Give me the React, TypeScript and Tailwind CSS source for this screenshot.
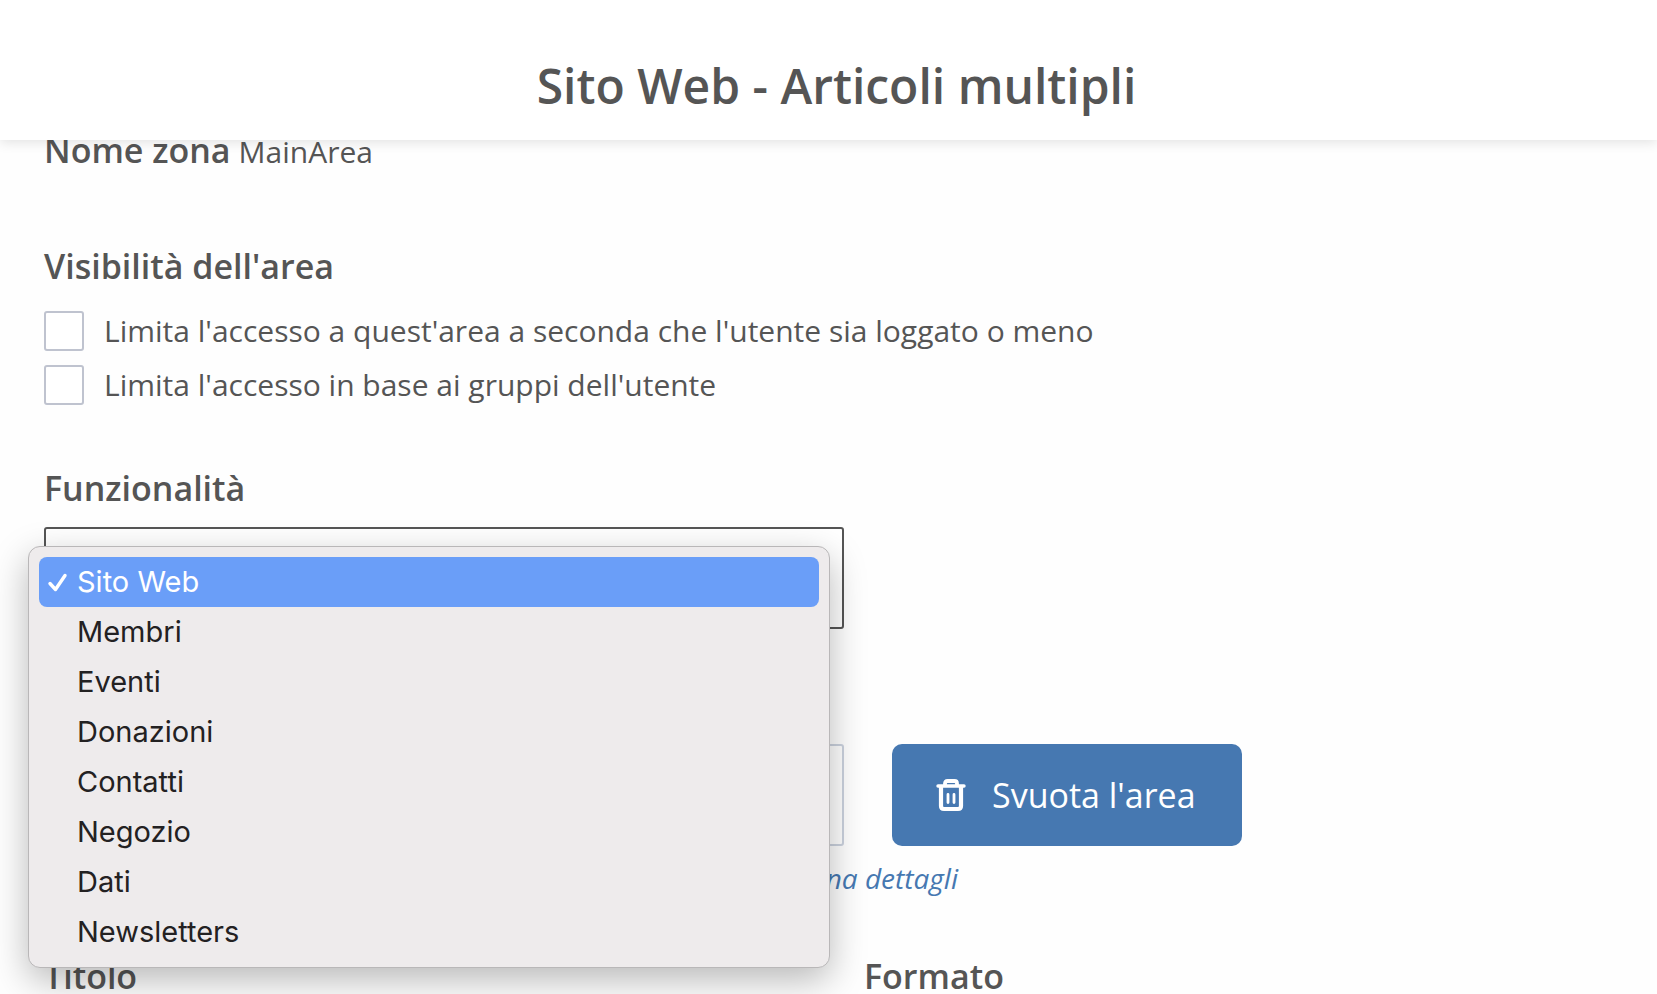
import { useState } from "react";

const features = ["Sito Web", "Membri", "Eventi", "Donazioni", "Contatti", "Negozio", "Dati", "Newsletters"];

const accessRules = [
  { id: "limit-login", label: "Limita l'accesso a quest'area a seconda che l'utente sia loggato o meno" },
  { id: "limit-groups", label: "Limita l'accesso in base ai gruppi dell'utente" },
];

function TrashIcon() {
  return (
    <svg width="30" height="34" viewBox="0 0 30 34" fill="none" stroke="currentColor" strokeLinecap="round" aria-hidden="true">
      <path d="M2 8H28" strokeWidth="3.400" />
      <path d="M9 7V5.500Q9 3 11.500 3H18.500Q21 3 21 5.500V7" strokeWidth="3.800" />
      <path d="M5 9V28Q5 31 8 31H22Q25 31 25 28V9" strokeWidth="4.200" />
      <path d="M12 16.500V24.500M18 16.500V24.500" strokeWidth="2.800" />
    </svg>
  );
}

function CheckIcon() {
  return (
    <svg width="22" height="22" viewBox="0 0 22 22" fill="none" stroke="currentColor" strokeWidth="3.400" strokeLinecap="round" strokeLinejoin="round" aria-hidden="true">
      <path d="M3 12.500L8.500 18.500L18 4.500" />
    </svg>
  );
}

interface FeatureMenuProps {
  value: string;
  onSelect: (value: string) => void;
}

function FeatureMenu({ value, onSelect }: Readonly<FeatureMenuProps>) {
  return (
    <div
      role="listbox"
      aria-label="Funzionalità"
      className="absolute top-[19px] -left-4 z-20 w-[802px] rounded-xl border border-[#b9b7b8] bg-[#eeebec] p-2.5 font-['Inter',sans-serif] text-[29px] leading-[50px] text-[#232122] shadow-[0_12px_36px_rgba(0,0,0,0.28)]"
    >
      {features.map((feature) => {
        const selected = feature === value;
        return (
          <button
            key={feature}
            type="button"
            role="option"
            aria-selected={selected}
            onClick={() => onSelect(feature)}
            className={`flex w-full items-center rounded-lg text-left ${selected ? "bg-[#6a9ef8] text-white" : ""}`}
          >
            <span className="flex w-[38px] justify-center">{selected && <CheckIcon />}</span>
            {feature}
          </button>
        );
      })}
    </div>
  );
}

export default function App() {
  const [feature, setFeature] = useState("Sito Web");

  return (
    <div className="h-screen overflow-hidden bg-[#fefefe] font-['Open_Sans',sans-serif] text-[30px] leading-10 text-[#555]">
      <header className="relative z-10 bg-white pt-[62px] pb-[30px] pl-4 text-center shadow-[0_2px_12px_rgba(0,0,0,0.12)]">
        <h1 className="text-5xl leading-[48px] font-semibold">Sito Web - Articoli multipli</h1>
      </header>

      <main className="-mt-2.5 px-11">
        <div className="flex items-baseline gap-2">
          <span className="text-[34px] leading-10 font-semibold">Nome zona</span>
          <span>MainArea</span>
        </div>

        <fieldset className="mt-[74px]">
          <legend className="text-[34px] leading-10 font-semibold">Visibilità dell'area</legend>
          <div className="mt-[25px] flex flex-col gap-3.5">
            {accessRules.map((rule) => (
              <div key={rule.id} className="flex items-center gap-5">
                <input
                  id={rule.id}
                  type="checkbox"
                  className="size-10 appearance-none rounded-[3px] border-2 border-[#bfc3cf] bg-white checked:bg-[#4678b1]"
                />
                <label htmlFor={rule.id}>{rule.label}</label>
              </div>
            ))}
          </div>
        </fieldset>

        <label htmlFor="feature" className="mt-[63px] block text-[34px] leading-10 font-semibold">
          Funzionalità
        </label>
        <div className="relative mt-[19px] w-[800px]">
          <select
            id="feature"
            value={feature}
            onChange={(e) => setFeature(e.target.value)}
            className="block h-[102px] w-full appearance-none rounded-[3px] border-2 border-[#555] bg-white px-8"
          >
            {features.map((f) => (
              <option key={f}>{f}</option>
            ))}
          </select>
          <FeatureMenu value={feature} onSelect={setFeature} />
        </div>

        <div className="mt-[115px] flex gap-12">
          <select
            aria-label="Contenuto"
            className="h-[102px] w-[800px] appearance-none rounded-[3px] border-2 border-[#cbd2de] bg-white px-8"
          />
          <button
            type="button"
            className="flex h-[102px] w-[350px] items-center gap-[26px] rounded-[10px] bg-[#4678b1] pl-11 text-[34px] text-white"
          >
            <TrashIcon />
            Svuota l'area
          </button>
        </div>
        <div className="mt-3 w-[914px] text-right">
          <a href="#dettagli" className="text-[28px] leading-10 text-[#4678b1] italic">
            pagina dettagli
          </a>
        </div>

        <div className="mt-[60px] flex gap-5 text-[34px] leading-9 font-semibold">
          <div className="w-[800px]">Titolo</div>
          <div>Formato</div>
        </div>
      </main>
    </div>
  );
}
